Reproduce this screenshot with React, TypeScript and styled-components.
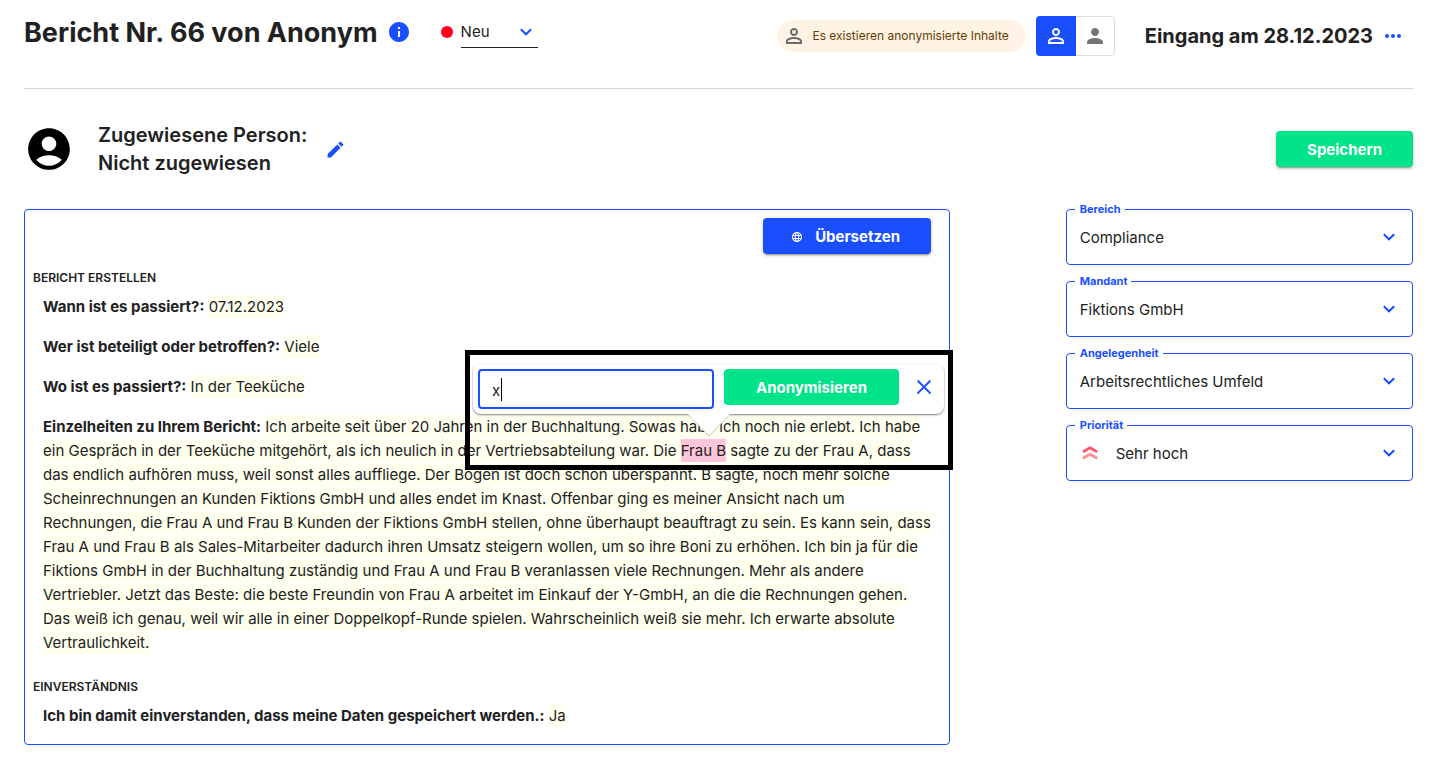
import React, { useState } from "react";
import styled, { createGlobalStyle, css } from "styled-components";
import {
  MdAccountCircle,
  MdEdit,
  MdInfo,
  MdLanguage,
  MdMoreHoriz,
  MdPerson,
  MdPersonOutline,
} from "react-icons/md";

const blue = "#1a4fff";
const green = "#00e389";
const ink = "#212121";

const GlobalStyle = createGlobalStyle`
  *, *::before, *::after { box-sizing: border-box; }
  body {
    margin: 0;
    background: #fff;
    color: ${ink};
    font: 400 15px/24px Inter, "Open Sans", sans-serif;
  }
  h1, h2, h3, p { margin: 0; }
  button, input, select { font: inherit; color: inherit; }
  svg { display: block; flex: none; }
`;

const Page = styled.div`
  padding: 16px 27px 12px 24px;
`;

const Header = styled.header`
  display: flex;
  justify-content: space-between;
  align-items: flex-start;
  padding-bottom: 32px;
  border-bottom: 1px solid #cfd8e0;
`;

const HeaderGroup = styled.div<{ $height: number }>`
  display: flex;
  align-items: center;
  height: ${(p) => p.$height}px;
`;

const Title = styled.h1`
  margin-right: 9px;
  padding-top: 2px;
  font-size: 27px;
  line-height: 32px;
  font-weight: 700;
`;

const ReceivedDate = styled.h2`
  font-size: 20px;
  line-height: 28px;
  font-weight: 700;
  margin: 0 8px 0 30px;
`;

const IconButton = styled.button<{ $color?: string }>`
  display: grid;
  place-items: center;
  width: 24px;
  height: 24px;
  padding: 0;
  border: 0;
  background: none;
  color: ${(p) => p.$color || blue};
  cursor: pointer;
`;

const MenuButton = styled(IconButton)`
  margin-right: 8px;
`;

const StatusDot = styled.span`
  width: 12px;
  height: 12px;
  margin: 0 8px 0 30px;
  border-radius: 50%;
  background: #ff0018;
`;

const SelectBox = styled.div`
  position: relative;
  display: flex;
`;

const ChevronSlot = styled.span<{ $right: number }>`
  position: absolute;
  right: ${(p) => p.$right}px;
  top: 0;
  bottom: 0;
  display: flex;
  align-items: center;
  color: ${blue};
  pointer-events: none;
`;

const StatusSelect = styled.select`
  appearance: none;
  width: 77px;
  height: 32px;
  padding: 0;
  border: 0;
  border-bottom: 1px solid ${ink};
  background: none;
`;

const Notice = styled.div`
  display: flex;
  align-items: center;
  gap: 6px;
  height: 32px;
  padding: 0 17px 0 5px;
  margin-right: 10px;
  border-radius: 16px;
  background: #fff3e5;
  color: #663c00;
  font-size: 12px;
  svg { color: #6b6b6b; }
`;

const ToggleGroup = styled.div`
  display: flex;
  height: 40px;
  border: 1px solid #dcdcdc;
  border-radius: 4px;
`;

const Toggle = styled.button<{ $active?: boolean }>`
  display: grid;
  place-items: center;
  width: 38px;
  padding: 0;
  border: 0;
  background: none;
  color: #757575;
  ${(p) =>
    p.$active &&
    css`
      width: 40px;
      margin: -1px 0 -1px -1px;
      border-radius: 4px 0 0 4px;
      background: ${blue};
      color: #fff;
    `}
`;

const AssigneeBar = styled.section`
  display: flex;
  align-items: center;
  padding: 32px 0;
`;

const Assignee = styled.h2`
  margin: 0 16px 0 24px;
  font-size: 20px;
  line-height: 28px;
  font-weight: 600;
`;

const ActionButton = styled.button<{ $tone: string; $raised?: boolean }>`
  display: flex;
  align-items: center;
  justify-content: center;
  gap: 12px;
  flex: none;
  height: 36px;
  padding: 2px 31px 0;
  border: 0;
  border-radius: 4px;
  background: ${(p) => p.$tone};
  color: #fff;
  font-weight: 700;
  cursor: pointer;
  ${(p) =>
    p.$raised &&
    css`
      box-shadow: 0 3px 1px -2px rgba(0, 0, 0, 0.2), 0 2px 2px rgba(0, 0, 0, 0.14),
        0 1px 5px rgba(0, 0, 0, 0.12);
    `}
`;

const SaveButton = styled(ActionButton)`
  margin-left: auto;
`;

const TranslateButton = styled(ActionButton)`
  padding-left: 28px;
`;

const AnonymizeButton = styled(ActionButton)`
  padding-left: 32px;
  padding-right: 32px;
`;

const Columns = styled.main`
  display: grid;
  grid-template-columns: 8fr 1fr 3fr;
  align-items: start;
`;

const ReportCard = styled.article`
  position: relative;
  padding: 8px 8px 0;
  border: 1px solid ${blue};
  border-radius: 4px;
`;

const CardToolbar = styled.div`
  display: flex;
  justify-content: flex-end;
  padding: 0 10px 8px 0;
`;

const Section = styled.section`
  padding-top: 6px;
`;

const SectionTitle = styled.h3`
  margin-bottom: 7px;
  font-size: 12px;
  line-height: 20px;
  font-weight: 600;
  text-transform: uppercase;
`;

const Answer = styled.p`
  padding: 0 0 16px 10px;
`;

const Highlight = styled.span`
  padding: 2px 0;
  background: #ffffee;
`;

const Selected = styled.mark`
  padding: 2px 0;
  background: #ffc6d9;
  color: inherit;
`;

const Frame = styled.div`
  position: absolute;
  top: 140px;
  right: -4px;
  width: 488px;
  height: 120px;
  padding: 9px 4px 0 3px;
  border: 5px solid #000;
`;

const Popover = styled.form`
  position: relative;
  display: flex;
  align-items: flex-start;
  height: 50px;
  padding: 5px;
  border-radius: 8px;
  background: #fff;
  box-shadow: 0 1px 2px rgba(0, 0, 0, 0.5);
`;

const ReplacementBox = styled.div`
  position: relative;
  flex: 1;
  margin-right: 10px;
`;

const ReplacementInput = styled.input`
  display: block;
  width: 100%;
  height: 40px;
  padding: 2px 12px 0;
  border: 2px solid ${blue};
  border-radius: 4px;
  outline: 0;
  background: #fff;
`;

const Caret = styled.span`
  position: absolute;
  left: 23px;
  top: 9px;
  width: 1px;
  height: 23px;
  background: #000;
`;

const CloseButton = styled(IconButton)`
  height: 36px;
  margin: 0 3px 0 13px;
`;

const Pointer = styled.svg`
  position: absolute;
  left: 215px;
  top: 50px;
`;

const Fields = styled.aside`
  grid-column: 3;
  display: grid;
  gap: 16px;
`;

const FieldBox = styled.div`
  position: relative;
  display: flex;
  align-items: center;
  height: 56px;
  border: 1px solid ${blue};
  border-radius: 4px;
`;

const FieldLabel = styled.label`
  position: absolute;
  left: 8px;
  top: -9px;
  padding: 0 4px 0 5px;
  background: #fff;
  color: ${blue};
  font-size: 11px;
  line-height: 16px;
  font-weight: 700;
`;

const FieldSelect = styled.select<{ $indent?: boolean }>`
  appearance: none;
  width: 100%;
  height: 54px;
  padding: 2px 40px 0 ${(p) => (p.$indent ? 49 : 13)}px;
  border: 0;
  background: none;
`;

const FieldIcon = styled.span`
  position: absolute;
  left: 14px;
`;

function Chevron() {
  return (
    <svg width="12" height="8" viewBox="0 0 12 8" fill="none" stroke="currentColor" strokeWidth="2">
      <path d="M0.8 1.2 6 6.3l5.2-5.1" />
    </svg>
  );
}

function HighPriorityIcon() {
  return (
    <svg width="18" height="16" viewBox="0 0 18 16" fill="none" strokeWidth="2.8" strokeLinecap="round" strokeLinejoin="round">
      <path d="M2.8 6.4 9 2.8l6.2 3.6" stroke="#ff5464" />
      <path d="M2.8 12.8 9 9.2l6.2 3.6" stroke="#ff9099" />
    </svg>
  );
}

function Field({ id, label, value, icon }: { id: string; label: string; value: string; icon?: React.ReactNode }) {
  return (
    <FieldBox>
      <FieldLabel htmlFor={id}>{label}</FieldLabel>
      {icon && <FieldIcon>{icon}</FieldIcon>}
      <FieldSelect id={id} $indent={!!icon}>
        <option>{value}</option>
      </FieldSelect>
      <ChevronSlot $right={17}>
        <Chevron />
      </ChevronSlot>
    </FieldBox>
  );
}

export default function App() {
  const [replacement, setReplacement] = useState("x");
  return (
    <>
      <GlobalStyle />
      <Page>
        <Header>
          <HeaderGroup $height={32}>
            <Title>Bericht Nr. 66 von Anonym</Title>
            <IconButton aria-label="Information">
              <MdInfo size={24} />
            </IconButton>
            <StatusDot />
            <SelectBox>
              <StatusSelect aria-label="Status">
                <option>Neu</option>
              </StatusSelect>
              <ChevronSlot $right={6}>
                <Chevron />
              </ChevronSlot>
            </SelectBox>
          </HeaderGroup>
          <HeaderGroup $height={40}>
            <Notice>
              <MdPersonOutline size={24} />
              Es existieren anonymisierte Inhalte
            </Notice>
            <ToggleGroup>
              <Toggle $active aria-label="Anonymisierte Ansicht">
                <MdPersonOutline size={24} />
              </Toggle>
              <Toggle aria-label="Originalansicht">
                <MdPerson size={24} />
              </Toggle>
            </ToggleGroup>
            <ReceivedDate>Eingang am 28.12.2023</ReceivedDate>
            <MenuButton aria-label="Weitere Aktionen">
              <MdMoreHoriz size={24} />
            </MenuButton>
          </HeaderGroup>
        </Header>

        <AssigneeBar>
          <MdAccountCircle size={50} color="#000" />
          <Assignee>
            Zugewiesene Person:
            <br />
            Nicht zugewiesen
          </Assignee>
          <IconButton aria-label="Person bearbeiten">
            <MdEdit size={21} />
          </IconButton>
          <SaveButton $tone={green} $raised>
            Speichern
          </SaveButton>
        </AssigneeBar>

        <Columns>
          <ReportCard>
            <CardToolbar>
              <TranslateButton $tone={blue} $raised>
                <MdLanguage size={12} />
                Übersetzen
              </TranslateButton>
            </CardToolbar>
            <Section>
              <SectionTitle>Bericht erstellen</SectionTitle>
              <Answer>
                <b>Wann ist es passiert?:</b> <Highlight>07.12.2023</Highlight>
              </Answer>
              <Answer>
                <b>Wer ist beteiligt oder betroffen?:</b> <Highlight>Viele</Highlight>
              </Answer>
              <Answer>
                <b>Wo ist es passiert?:</b> <Highlight>In der Teeküche</Highlight>
              </Answer>
              <Answer>
                <b>Einzelheiten zu Ihrem Bericht:</b>{" "}
                <Highlight>
                  Ich arbeite seit über 20 Jahren in der Buchhaltung. Sowas habe ich noch nie erlebt. Ich habe
                  <br />
                  ein Gespräch in der Teeküche mitgehört, als ich neulich in der Vertriebsabteilung war. Die{" "}
                  <Selected>Frau B</Selected> sagte zu der Frau A, dass
                  <br />
                  das endlich aufhören muss, weil sonst alles auffliege. Der Bogen ist doch schon überspannt. B sagte, noch mehr solche
                  <br />
                  Scheinrechnungen an Kunden Fiktions GmbH und alles endet im Knast. Offenbar ging es meiner Ansicht nach um
                  <br />
                  Rechnungen, die Frau A und Frau B Kunden der Fiktions GmbH stellen, ohne überhaupt beauftragt zu sein. Es kann sein, dass
                  <br />
                  Frau A und Frau B als Sales-Mitarbeiter dadurch ihren Umsatz steigern wollen, um so ihre Boni zu erhöhen. Ich bin ja für die
                  <br />
                  Fiktions GmbH in der Buchhaltung zuständig und Frau A und Frau B veranlassen viele Rechnungen. Mehr als andere
                  <br />
                  Vertriebler. Jetzt das Beste: die beste Freundin von Frau A arbeitet im Einkauf der Y-GmbH, an die die Rechnungen gehen.
                  <br />
                  Das weiß ich genau, weil wir alle in einer Doppelkopf-Runde spielen. Wahrscheinlich weiß sie mehr. Ich erwarte absolute
                  <br />
                  Vertraulichkeit.
                </Highlight>
              </Answer>
            </Section>
            <Section>
              <SectionTitle>Einverständnis</SectionTitle>
              <Answer>
                <b>Ich bin damit einverstanden, dass meine Daten gespeichert werden.:</b> <Highlight>Ja</Highlight>
              </Answer>
            </Section>

            <Frame>
              <Popover onSubmit={(e) => e.preventDefault()}>
                <ReplacementBox>
                  <ReplacementInput
                    aria-label="Ersatztext"
                    value={replacement}
                    onChange={(e) => setReplacement(e.target.value)}
                  />
                  <Caret />
                </ReplacementBox>
                <AnonymizeButton $tone={green}>Anonymisieren</AnonymizeButton>
                <CloseButton type="button" aria-label="Schließen">
                  <svg width="16" height="16" viewBox="0 0 16 16" fill="none" stroke="currentColor" strokeWidth="1.8">
                    <path d="M1.5 1.5l13 13M14.5 1.5l-13 13" />
                  </svg>
                </CloseButton>
                <Pointer width="42" height="23" viewBox="0 0 42 23">
                  <path d="M0 0 21 22 42 0z" fill="#fff" />
                  <path d="M0 .5 21 22 42 .5" fill="none" stroke="#c4c4c0" />
                </Pointer>
              </Popover>
            </Frame>
          </ReportCard>

          <Fields>
            <Field id="bereich" label="Bereich" value="Compliance" />
            <Field id="mandant" label="Mandant" value="Fiktions GmbH" />
            <Field id="angelegenheit" label="Angelegenheit" value="Arbeitsrechtliches Umfeld" />
            <Field id="prioritaet" label="Priorität" value="Sehr hoch" icon={<HighPriorityIcon />} />
          </Fields>
        </Columns>
      </Page>
    </>
  );
}
